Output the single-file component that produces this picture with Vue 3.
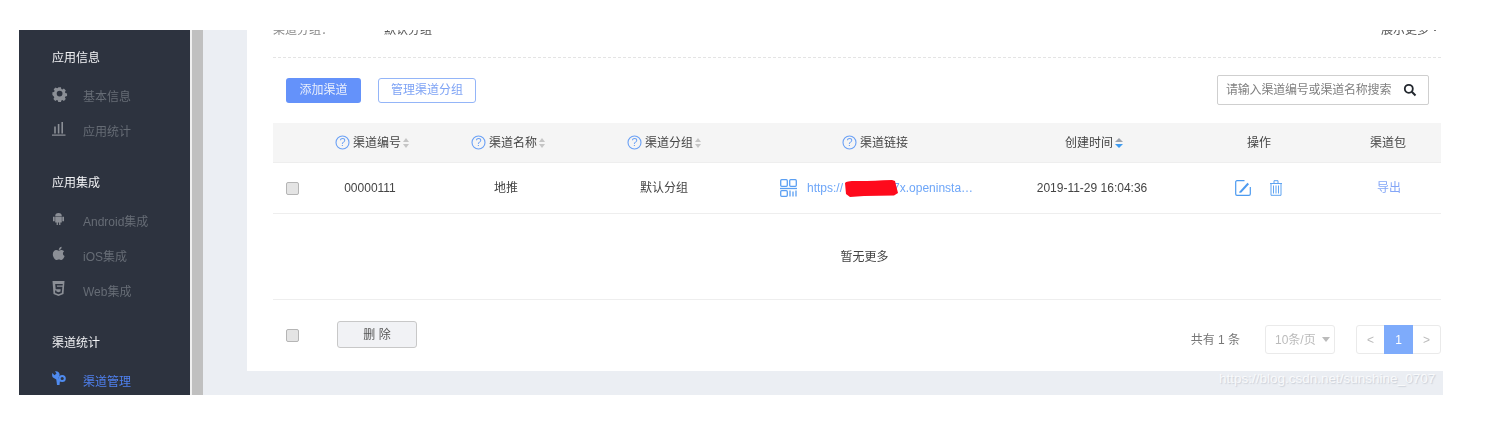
<script setup>
const groups = [
  { title: '应用信息', items: [{ label: '基本信息', icon: 'gear' }, { label: '应用统计', icon: 'bars' }] },
  { title: '应用集成', items: [{ label: 'Android集成', icon: 'android' }, { label: 'iOS集成', icon: 'apple' }, { label: 'Web集成', icon: 'html5' }] },
  { title: '渠道统计', items: [{ label: '渠道管理', icon: 'wrench', active: true }] },
]
const heads = [
  { label: '渠道编号', help: true, sort: true },
  { label: '渠道名称', help: true, sort: true },
  { label: '渠道分组', help: true, sort: true },
  { label: '渠道链接', help: true },
  { label: '创建时间', sort: true, desc: true },
  { label: '操作' },
  { label: '渠道包' },
]
</script>

<template>
  <div class="page">
    <div class="frame">
      <aside class="side">
        <section v-for="g in groups" :key="g.title" class="group">
          <h4 class="group-title">{{ g.title }}</h4>
          <div v-for="it in g.items" :key="it.label" class="item" :class="{ active: it.active }">
            <span class="item-icon">
              <svg v-if="it.icon === 'gear'" width="16" height="16" viewBox="0 0 16 16"><path fill="currentColor" fill-rule="evenodd" d="M6.500 1h3l.4 1.900 1.200.5 1.700-1 2.100 2.100-1 1.700.5 1.200 1.900.4v3l-1.900.4-.5 1.200 1 1.700-2.100 2.100-1.700-1-1.200.5-.4 1.900h-3l-.4-1.900-1.200-.5-1.700 1-2.100-2.100 1-1.700-.5-1.200L0 9.500v-3l1.900-.4.500-1.200-1-1.700 2.100-2.100 1.700 1 1.200-.5zM8 4.800a3.200 3.200 0 1 0 0 6.400 3.200 3.200 0 0 0 0-6.400z" transform="translate(.4 .4) scale(.9)"/></svg>
              <svg v-else-if="it.icon === 'bars'" width="16" height="16" viewBox="0 0 16 16"><path fill="currentColor" d="M0 13.500h13.500v1.200H0zM2.200 5.500h1.600v7H2.200zM5.800 3h1.600v9.500H5.800zM9.400 1h1.600v11.500H9.400z"/></svg>
              <svg v-else-if="it.icon === 'android'" width="16" height="16" viewBox="0 0 16 16"><path fill="currentColor" d="M3.200 5.300a3.300 3.300 0 0 1 6.600 0zM3.200 5.800h6.600v5.700H8.400V14H7.100v-2.500H5.900V14H4.600v-2.500H3.200zM1 5.800h1.700v4.500H1zM10.300 5.800H12v4.500h-1.700z"/></svg>
              <svg v-else-if="it.icon === 'apple'" width="16" height="16" viewBox="0 0 16 16"><path fill="currentColor" d="M6.800 4.800c1-.6 2-1 3-.8 1 .1 1.800.6 2.300 1.300-1.800 1.200-1.500 3.800.5 4.700-.5 1.500-1.700 4-3.200 4-.9 0-1.300-.5-2.500-.5s-1.600.5-2.500.5C2.700 14 .8 10.700.8 8.300.8 5.600 2.500 4 4.200 4c.9 0 1.800.5 2.600.8zM6.800 3.900C6.800 2.300 8 1 9.600.8 9.800 2.500 8.400 4 6.800 3.900z"/></svg>
              <svg v-else-if="it.icon === 'html5'" width="16" height="16" viewBox="0 0 16 16"><path fill="currentColor" fill-rule="evenodd" d="M.5 0h12l-1 13-5 2-5-2zM3.200 3l.5 5.300h5l-.2 2.300-2 .6-2-.6-.1-1H3l.2 2.400 3.300 1.200 3.300-1.200.6-6.200H5l-.1-1.200h5.700l.2-1.600z"/></svg>
              <svg v-else width="16" height="16" viewBox="0 0 16 16"><path fill="currentColor" d="M.3 2 2.500 4.300 4.500 2.500 3 .3C6-.3 8.200 2 7.500 4.500L6.500 7 8 9.500 7.500 14 5 14 4.300 8.500 1 6.500C0 5.500 0 3.500.3 2z"/><circle cx="10.200" cy="7.500" r="2.600" fill="none" stroke="currentColor" stroke-width="2"/></svg>
            </span>
            <span>{{ it.label }}</span>
          </div>
        </section>
      </aside>
      <div class="rail"></div>
      <main class="main">
        <div class="card">
          <div class="info">
            <span class="info-label">渠道分组：</span>
            <span class="info-value">默认分组</span>
            <span class="info-more">展示更多<svg width="6" height="4" viewBox="0 0 6 4" fill="none" stroke="#777" stroke-width="1"><path d="m.5.5 2.500 2.500L5.500.5"/></svg></span>
          </div>
          <div class="toolbar">
            <button class="btn primary">添加渠道</button>
            <button class="btn outline">管理渠道分组</button>
            <div class="search">
              <span class="placeholder">请输入渠道编号或渠道名称搜索</span>
              <svg width="14" height="14" viewBox="0 0 14 14"><circle cx="5.800" cy="5.800" r="4" fill="none" stroke="#22272e" stroke-width="1.800"/><path d="m8.800 8.800 3.700 3.700" stroke="#22272e" stroke-width="2"/></svg>
            </div>
          </div>
          <div class="grid head">
            <span></span>
            <span v-for="h in heads" :key="h.label" class="cell">
              <svg v-if="h.help" class="help" width="15" height="15" viewBox="0 0 15 15"><circle cx="7.500" cy="7.500" r="6.500" fill="none" stroke="#6aa0f5" stroke-width="1.100"/><text x="7.500" y="11.200" text-anchor="middle" font-size="11" fill="#6aa0f5" font-family="Liberation Sans, sans-serif">?</text></svg>
              <span>{{ h.label }}</span>
              <span v-if="h.sort" class="sort" :class="{ desc: h.desc }"><i class="up"></i><i class="down"></i></span>
            </span>
          </div>
          <div class="grid row">
            <span class="cell"><span class="check"></span></span>
            <span class="cell">00000111</span>
            <span class="cell">地推</span>
            <span class="cell">默认分组</span>
            <span class="cell link">
              <svg width="17" height="18" viewBox="0 0 17 18" fill="none" stroke="#5b9ff2" stroke-width="1.300"><rect x=".7" y=".7" width="6.600" height="6.600" rx="1"/><rect x="9.700" y=".7" width="6.600" height="6.600" rx="1"/><path d="M0 9.500h17"/><rect x=".7" y="11.700" width="6.600" height="5.600" rx="1"/><path d="M10 11.500v6M13 12.500v5M16 11.500v6"/></svg>
              <span class="url">https://<svg class="redact" width="54" height="17" viewBox="0 0 54 17"><path fill="#fe0a1c" d="M1 3C3 1 8 1 14 1 26 1 36 .5 48 0L51 1 54 13 50 15.500 20 16 6 17 2 14Z"/></svg>7x.openinsta…</span>
            </span>
            <span class="cell">2019-11-29 16:04:36</span>
            <span class="cell ops">
              <svg width="16" height="16" viewBox="0 0 16 16" fill="none"><path d="M9.500 .7H2a1.300 1.300 0 0 0-1.300 1.300v12A1.300 1.300 0 0 0 2 15.300h12a1.300 1.300 0 0 0 1.300-1.300V7" stroke="#4d9bf0" stroke-width="1.200"/><path d="M4.800 11.200 12.500 2.700l1.500 1.500-7.600 8.300-2.200.6z" fill="#4d9bf0"/></svg>
              <svg width="12" height="16" viewBox="0 0 12 16" fill="none" stroke="#5ea4f2" stroke-width="1"><path d="M0 3.500h12M4 3.500V.7h4v2.800M1 3.500v11.800h10V3.500M3.500 5.500v8M6 5.500v8M8.500 5.500v8"/></svg>
            </span>
            <span class="cell export">导出</span>
          </div>
          <div class="empty">暂无更多</div>
          <div class="footer">
            <span class="check foot-check"></span>
            <button class="btn del">删 除</button>
            <div class="paging">
              <span class="total">共有 1 条</span>
              <span class="select">10条/页<i class="caret"></i></span>
              <div class="pager">
                <span class="pg">&lt;</span>
                <span class="pg cur">1</span>
                <span class="pg">&gt;</span>
              </div>
            </div>
          </div>
        </div>
      </main>
    </div>
    <span class="mark">https://blog.csdn.net/sunshine_0707</span>
  </div>
</template>

<style>
html, body { margin: 0; background: #fff; }
</style>

<style scoped>
.page {
  position: relative;
  width: 1490px;
  height: 428px;
  padding: 30px 47px 33px 19px;
  box-sizing: border-box;
  overflow: hidden;
  font: 12px/16px "Liberation Sans", "Noto Sans CJK SC", sans-serif;
  color: #444;
}
.frame { display: flex; height: 365px; overflow: hidden; filter: blur(.3px); }
.side {
  width: 171px;
  flex: none;
  background: #2d333f;
  color: #666c75;
  padding: 20px 0 0 33px;
  box-sizing: border-box;
}
.group { margin-bottom: 26px; }
.group-title { margin: 0 0 13px; font-size: 12px; line-height: 16px; font-weight: 400; color: #f2f3f5; }
.item { display: flex; align-items: center; height: 35px; }
.item-icon { width: 31px; display: flex; height: 16px; margin-top: -5px; color: #8b8f96; }
.item.active { color: #4f80ef; }
.item.active .item-icon { color: #4f8bef; }
.rail { width: 13px; flex: none; background: #c0c0c0; border-left: 2px solid #f0f0f0; box-sizing: border-box; }
.main { flex: 1; background: #ebeef3; padding: 0 0 24px 44px; min-width: 0; }
.card { height: 341px; background: #fff; padding: 0 2px 0 26px; box-sizing: border-box; overflow: hidden; }
.info {
  display: flex;
  height: 35px;
  margin-top: -8px;
  border-bottom: 1px dashed #e4e4e4;
  color: #555;
}
.info-label { width: 111px; color: #888; }
.info-more { margin-left: auto; margin-right: 3px; display: flex; align-items: center; gap: 3px; height: 16px; }
.toolbar { display: flex; align-items: center; height: 30px; margin: 17px 0 18px; padding: 0 12px 0 13px; }
.btn { font: inherit; border-radius: 3px; box-sizing: border-box; padding: 0; height: 25px; cursor: pointer; }
.primary { width: 75px; background: #6492fa; border: 0; color: #e8eefc; }
.outline { width: 98px; margin-left: 17px; background: #fff; border: 1px solid #94b5f8; color: #7ea3f5; }
.search {
  margin-left: auto;
  width: 212px;
  height: 30px;
  border: 1px solid #cfcfcf;
  border-radius: 2px;
  box-sizing: border-box;
  display: flex;
  align-items: center;
  justify-content: space-between;
  padding: 0 11px 0 8px;
  color: #808080;
  letter-spacing: -.2px;
}
.grid { display: grid; grid-template-columns: 40px 114px 158px 158px 264px 170px 164px 100px; }
.head { height: 39px; background: #f5f5f5; border-bottom: 1px solid #eee; }
.row { height: 50px; border-bottom: 1px solid #eee; }
.cell { display: flex; align-items: center; justify-content: center; min-width: 0; white-space: nowrap; }
.head .cell:nth-child(4) { padding-right: 4px; }
.head .cell:last-child { padding-right: 6px; }
.help { margin-right: 3px; flex: none; }
.sort { display: inline-flex; flex-direction: column; gap: 2px; margin: 0 -4px 0 2px; }
.sort i { display: block; width: 0; height: 0; border-left: 3px solid transparent; border-right: 3px solid transparent; }
.up { border-bottom: 4px solid #c5c5c5; }
.down { border-top: 4px solid #c5c5c5; }
.desc i { border-left-width: 4px; border-right-width: 4px; }
.desc .down { border-top-color: #3f9bf0; }
.desc .up { border-bottom-color: #9ea4ad; }
.check {
  display: block;
  width: 13px;
  height: 13px;
  box-sizing: border-box;
  background: #e4e4e4;
  border: 1px solid #b5b5b5;
  border-radius: 2px;
}
.row .cell:first-child { justify-content: flex-start; padding-left: 13px; }
.link { color: #6ea6f8; justify-content: flex-start; padding-left: 37px; gap: 10px; }
.url { display: flex; align-items: center; }
.redact { flex: none; margin: 0 -5px 0 1px; position: relative; z-index: 1; }
.ops { gap: 19px; padding-right: 2px; }
.export { color: #84a6f7; padding-right: 4px; }
.empty {
  height: 85px;
  display: flex;
  align-items: center;
  justify-content: center;
  padding-left: 15px;
  border-bottom: 1px solid #eee;
}
.footer { display: flex; align-items: center; height: 71px; padding-left: 13px; }
.foot-check { flex: none; }
.del { width: 80px; height: 27px; margin: -2px 0 0 38px; background: #f1f2f5; border: 1px solid #c8c8c8; color: #555; }
.paging { display: flex; align-items: center; margin: 8px 0 0 auto; }
.total { color: #777; }
.select {
  margin-left: 25px;
  width: 70px;
  height: 29px;
  border: 1px solid #eaeaea;
  border-radius: 3px;
  box-sizing: border-box;
  display: flex;
  align-items: center;
  justify-content: space-between;
  padding: 0 0 0 9px;
  color: #bbb;
}
.caret { border-left: 4px solid transparent; border-right: 4px solid transparent; border-top: 5px solid #bbb; margin-right: 4px; }
.pager { display: flex; margin-left: 21px; height: 29px; border: 1px solid #eaeaea; border-radius: 3px; box-sizing: border-box; width: 85px; }
.pg { flex: 1; display: flex; align-items: center; justify-content: center; color: #bbb; }
.cur { background: #7eabfb; color: #fff; flex: none; width: 29px; margin: -1px 0; }
.mark {
  position: absolute;
  left: 1219px;
  top: 371px;
  font-size: 13.5px;
  color: rgba(255, 255, 255, .8);
  text-shadow: 1px 1px 1px rgba(190, 195, 205, .7);
}
</style>
